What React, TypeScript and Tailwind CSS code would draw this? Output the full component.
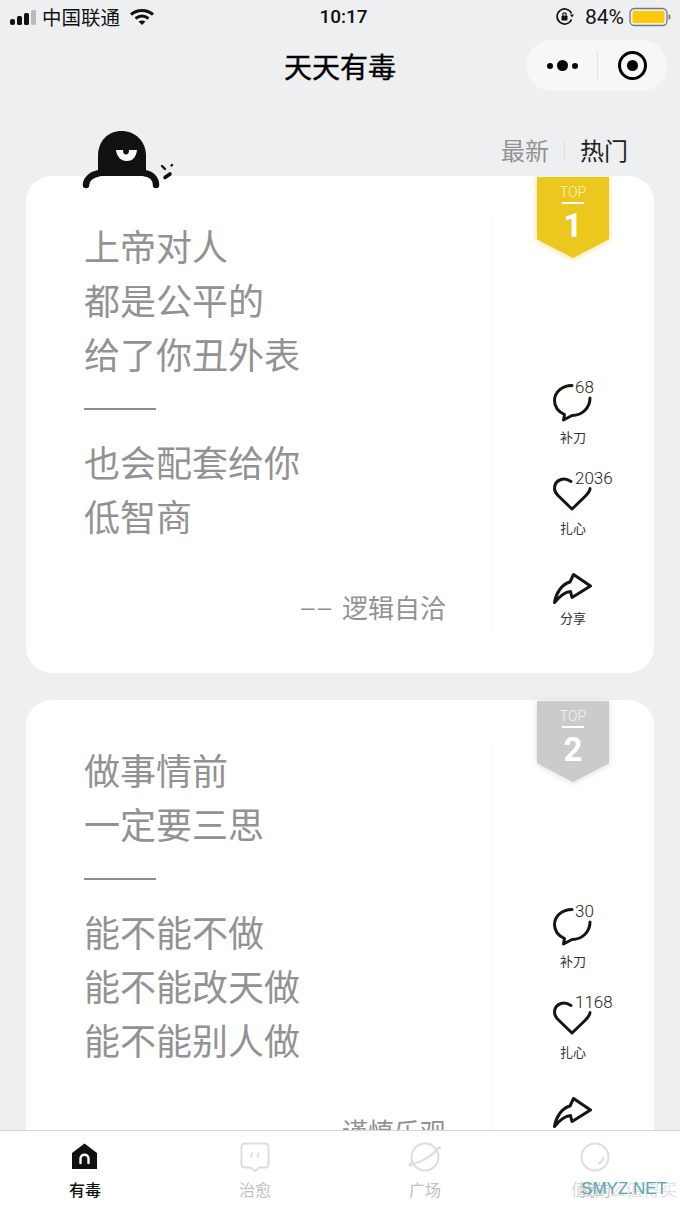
import React from 'react';

type Post = {
  rank: number;
  lines: string[];
  author: string;
  replies: number;
  likes: number;
  badge: string;
  glow: string;
};

const posts: Post[] = [
  { rank: 1, lines: ['上帝对人', '都是公平的', '给了你丑外表', '-', '也会配套给你', '低智商'], author: '逻辑自洽', replies: 68, likes: 2036, badge: 'bg-[#ecc81f]', glow: 'drop-shadow-[0_1px_3px_rgba(236,200,31,0.5)]' },
  { rank: 2, lines: ['做事情前', '一定要三思', '-', '能不能不做', '能不能改天做', '能不能别人做'], author: '谨慎乐观', replies: 30, likes: 1168, badge: 'bg-[#cbcbcb]', glow: 'drop-shadow-[0_1px_3px_rgba(190,190,190,0.5)]' },
];

function CommentIcon() {
  return (
    <svg width="40" height="40" viewBox="0 0 40 40" fill="none" stroke="#151515" strokeWidth="3" strokeLinecap="round" strokeLinejoin="round">
      <path d="M19 1.5C9 1.5 1.5 8 1.5 16.5C1.5 23 6 28 11.5 30.5L10.5 36L19 31.5C29 31.5 37 24 37 14" />
    </svg>
  );
}

function HeartIcon() {
  return (
    <svg width="40" height="40" viewBox="0 -1.5 40 40" fill="none" stroke="#151515" strokeWidth="3" strokeLinecap="round" strokeLinejoin="round">
      <path d="M18 5C15 3 11 2 8 3C3.5 4.5 1.5 8.5 1.5 12C1.5 15 3 17 5 19L19 32.5L32 20C35 17 37 15 37 12" />
    </svg>
  );
}

function ShareIcon() {
  return (
    <svg width="40" height="40" viewBox="0 -8 40 40" fill="none" stroke="#151515" strokeWidth="3" strokeLinecap="round" strokeLinejoin="round">
      <path d="M1.5 29.5C3 20 9 11 17 9L20.5 1.5L37.5 13L19 24.5L17.5 18.5C11 19 6 24 1.5 29.5Z" />
    </svg>
  );
}

function Mascot() {
  return (
    <svg width="98" height="62" viewBox="0 0 98 62" className="absolute left-[78px] top-[33px] z-10">
      <path d="M20 46V26C20 11 30 1 43.500 1C57 1 68 11 68 26V46Z" fill="#111" />
      <path d="M8 55C8 49 14 44 22 43M66 43C74 44 78 49 78 55" fill="none" stroke="#111" strokeWidth="6.500" strokeLinecap="round" />
      <path d="M38 20H59C58 28 54 31 48.500 31C43 31 39 27 38 20Z" fill="#fff" />
      <path d="M45 20H51C51 23 50 24.500 48 24.500C46 24.500 45 23 45 20Z" fill="#111" />
      <path d="M84 36L87 39M94 35L93.500 35.500" stroke="#111" strokeWidth="2.400" strokeLinecap="round" />
      <path d="M87 47.500L92 44" stroke="#111" strokeWidth="3.600" strokeLinecap="round" />
    </svg>
  );
}

function Action({ label, count, children }: { label: string; count?: number; children: React.ReactNode }) {
  return (
    <div className="relative flex h-[90.5px] w-[40px] flex-col items-center">
      {children}
      {count !== undefined && (
        <span className="absolute left-[22px] top-[-7px] font-['Roboto',sans-serif] text-[17px] font-light leading-[20px] text-[#222]">{count}</span>
      )}
      <span className="mt-[4px] whitespace-nowrap text-[13px] leading-[18px] text-[#333]">{label}</span>
    </div>
  );
}

function Card({ post }: { post: Post }) {
  return (
    <div className="relative mx-[26px] mb-[27px] flex h-[497px] shrink-0 rounded-[26px] bg-white">
      <div className="mt-[44px] h-[410px] w-[466px] border-r border-[#f5f5f5] pl-[58px]">
        {post.lines.map((line, i) =>
          line === '-' ? (
            <div key={i} className="flex h-[54px] items-center">
              <div className="h-[2px] w-[72px] bg-[#8f8f8f]" />
            </div>
          ) : (
            <div key={i} className="h-[54px] text-[36px] leading-[50px] text-[#929292]">{line}</div>
          ),
        )}
        <div className="mt-[45px] flex items-center justify-end gap-[8px] pr-[45px] text-[26px] leading-[36px] text-[#929292]">
          <span className="font-['Liberation_Sans',sans-serif] text-[24px] tracking-[3px]">––</span>
          <span>{post.author}</span>
        </div>
      </div>
      <div className="flex flex-1 flex-col items-center pt-[208px]">
        <Action label="补刀" count={post.replies}><CommentIcon /></Action>
        <Action label="扎心" count={post.likes}><HeartIcon /></Action>
        <Action label="分享"><ShareIcon /></Action>
      </div>
      <div className={`absolute right-[45px] top-[1px] ${post.glow}`}>
        <div className={`flex h-[81px] w-[72px] flex-col items-center pt-[7px] text-white [clip-path:polygon(0_0,100%_0,100%_77%,50%_100%,0_77%)] ${post.badge}`}>
          <span className="font-['Roboto',sans-serif] text-[14px] font-light leading-[16px] opacity-80">TOP</span>
          <div className="mt-[2px] h-[2px] w-[22px] bg-white" />
          <span className="mt-[3px] font-['Roboto',sans-serif] text-[33px] font-bold leading-[38px]">{post.rank}</span>
        </div>
      </div>
    </div>
  );
}

function StatusBar() {
  return (
    <div className="grid h-[34px] shrink-0 grid-cols-[1fr_auto_1fr] items-center px-[10px] text-[#111]">
      <div className="flex items-center">
        <svg width="27" height="17" viewBox="0 0 27 17">
          <rect x="0" y="10" width="5" height="6" rx="2" fill="#111" />
          <rect x="7" y="7" width="5" height="9" rx="1.5" fill="#111" />
          <rect x="14" y="4" width="5" height="12" rx="1.5" fill="#111" />
          <rect x="21" y="1" width="5" height="15" rx="1.5" fill="#bbb" />
        </svg>
        <span className="ml-[5px] text-[19.5px] leading-[24px]">中国联通</span>
        <svg width="26" height="18" viewBox="0 0 26 18" className="ml-[9px]" fill="none" stroke="#111" strokeWidth="3">
          <path d="M2 6.5C8.5 1 17.5 1 24 6.5" />
          <path d="M6.5 10.5C10.5 7.5 15.5 7.5 19.5 10.5" />
          <path d="M13 17L9.5 13.5C11.5 12 14.5 12 16.5 13.5Z" fill="#111" stroke="none" />
        </svg>
      </div>
      <span className="ml-[7px] font-['Roboto',sans-serif] text-[19px] font-medium leading-[24px]">10:17</span>
      <div className="flex items-center justify-end">
        <svg width="20" height="20" viewBox="0 0 20 20" fill="none" stroke="#111" strokeWidth="1.7">
          <path d="M16.5 12.5A7.5 7.5 0 1 1 16.5 6.500" />
          <path d="M15 7.5H19L17 10.5Z" fill="#111" stroke="none" />
          <rect x="6.5" y="8.5" width="6" height="5" rx="1" fill="#111" stroke="none" />
          <path d="M7.8 8.5V7.500A1.7 1.7 0 0 1 11.2 7.500V8.500" strokeWidth="1.2" />
        </svg>
        <span className="ml-[10px] font-['Roboto',sans-serif] text-[21px] leading-[24px]">84%</span>
        <svg width="42" height="20" viewBox="0 0 42 20" className="ml-[5px] mr-[-1px]">
          <rect x="1" y="1.500" width="37" height="17" rx="4.500" fill="none" stroke="#777" strokeWidth="1.300" />
          <rect x="3.500" y="4" width="32" height="12" rx="2" fill="#fbc80c" />
          <rect x="39.500" y="7.500" width="1.800" height="5" rx="0.900" fill="#777" />
        </svg>
      </div>
    </div>
  );
}

function NavBar() {
  return (
    <div className="grid h-[63px] shrink-0 grid-cols-[1fr_auto_1fr] items-center">
      <div />
      <span className="text-[28px] leading-[36px] text-black [-webkit-text-stroke:0.4px_black]">天天有毒</span>
      <div className="flex justify-end pr-[13px]">
        <div className="flex h-[51px] w-[141px] items-center rounded-full bg-[#f7f7f8]">
          <div className="flex w-[52px] items-center justify-end gap-[4px]">
            <span className="h-[6px] w-[6px] rounded-full bg-black" />
            <span className="h-[11px] w-[11px] rounded-full bg-black" />
            <span className="h-[6px] w-[6px] rounded-full bg-black" />
          </div>
          <div className="ml-[19px] h-[30px] w-px bg-[#e2e2e2]" />
          <div className="ml-[20px] flex h-[29px] w-[29px] items-center justify-center rounded-full border-[3px] border-black">
            <span className="h-[11px] w-[11px] rounded-full bg-black" />
          </div>
        </div>
      </div>
    </div>
  );
}

function TabIcon({ name }: { name: string }) {
  if (name === 'home') {
    return (
      <svg width="30" height="30" viewBox="0 0 30 30">
        <path d="M2 11L14.5 1.500L27 11V27H2Z" fill="#111" />
        <path d="M10.500 21V16.500C10.500 11.500 18.500 11.500 18.500 16.500V21" fill="none" stroke="#fff" strokeWidth="2.400" strokeLinecap="round" />
      </svg>
    );
  }
  if (name === 'chat') {
    return (
      <svg width="30" height="30" viewBox="0 0 30 30" fill="none" stroke="#dedede" strokeWidth="2">
        <path d="M5 1.500H25C27 1.500 28.500 3 28.500 5V22C28.500 24 27 25.500 25 25.500H19.500L15 29L10.500 25.500H5C3 25.500 1.500 24 1.500 22V5C1.500 3 3 1.500 5 1.500Z" />
        <path d="M12 11.500L11.200 15M18.500 11.500L17.700 15" strokeLinecap="round" />
      </svg>
    );
  }
  if (name === 'planet') {
    return (
      <svg width="34" height="34" viewBox="0 0 34 34" fill="none" stroke="#dedede" strokeWidth="2">
        <circle cx="17" cy="17" r="13.500" />
        <path d="M3.500 24C12 23 24 16 30.500 8" />
        <circle cx="31.500" cy="7.500" r="1.600" fill="#dedede" stroke="none" />
        <circle cx="2.500" cy="24.500" r="2" fill="#dedede" stroke="none" />
      </svg>
    );
  }
  return (
    <svg width="30" height="30" viewBox="0 0 30 30" fill="none" stroke="#dedede" strokeWidth="2">
      <circle cx="15" cy="15" r="13.500" />
      <path d="M23 15.500C23 18 22 20 19 21.500" strokeLinecap="round" />
    </svg>
  );
}

const tabs = [
  { name: 'home', label: '有毒', active: true },
  { name: 'chat', label: '治愈', active: false },
  { name: 'planet', label: '广场', active: false },
  { name: 'ring', label: '我的', active: false },
];

export default function App() {
  return (
    <div className="relative flex h-[1209px] w-[680px] flex-col overflow-hidden bg-[#eeeff1] font-['Noto_Sans_CJK_SC','Noto_Sans',sans-serif]">
      <StatusBar />
      <NavBar />
      <div className="relative z-10 flex h-[79px] shrink-0 items-end justify-end pb-[11px] pr-[52px]">
        <Mascot />
        <span className="text-[24px] leading-[30px] text-[#929292]">最新</span>
        <span className="mx-[15px] mb-[5px] h-[20px] w-px bg-[#e0e0e0]" />
        <span className="text-[24px] leading-[30px] text-[#222]">热门</span>
      </div>
      <div className="min-h-0 flex-1 overflow-hidden">
        {posts.map((post) => (
          <Card key={post.rank} post={post} />
        ))}
      </div>
      <div className="grid h-[79px] shrink-0 grid-cols-4 border-t border-[#d6d6d6] bg-white">
        {tabs.map((tab) => (
          <div key={tab.name} className="flex flex-col items-center">
            <div className="flex h-[46px] items-center justify-center pt-[6px]">
              <TabIcon name={tab.name} />
            </div>
            <span className={tab.active ? 'text-[16px] font-medium leading-[24px] text-[#111]' : 'text-[16px] leading-[24px] text-[#c0c0c0]'}>{tab.label}</span>
          </div>
        ))}
      </div>
      <div className="absolute bottom-[8px] right-[3px] flex items-center text-[17px] leading-[24px]">
        <span className="text-[#d8d8d8]">值</span>
        <span className="ml-[4px] text-[#e2e2e2]">什么值得买</span>
      </div>
      <span className="absolute bottom-[8px] right-[13px] font-['Liberation_Sans',sans-serif] text-[17px] leading-[24px] text-[#5aa7b5]">SMYZ.NET</span>
    </div>
  );
}
